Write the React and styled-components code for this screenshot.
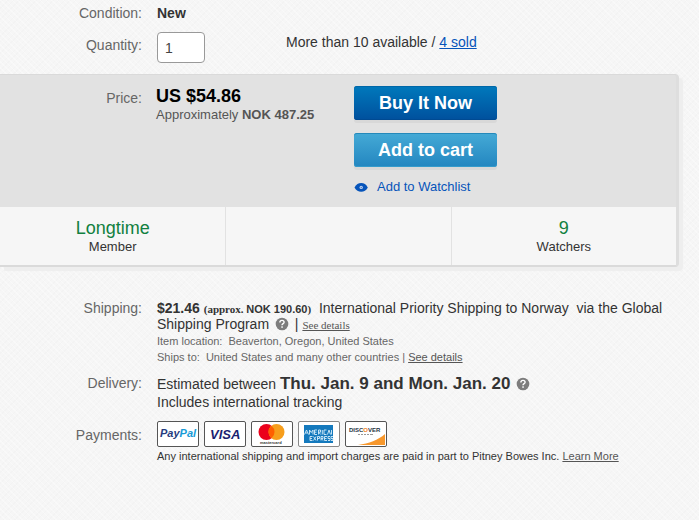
import styled, { createGlobalStyle } from "styled-components";

const App = () => {
  return (
    <>
      <GlobalStyle />
      <Page>
        <Options>
          <Row>
            <Label>Condition:</Label>
            <Value>
              <strong>New</strong>
            </Value>
          </Row>
          <Row>
            <Label as="label" htmlFor="quantity" $top={5}>Quantity:</Label>
            <QuantityValue>
              <QuantityInput id="quantity" type="text" defaultValue="1" />
              <Available>
                More than 10 available / <SoldLink href="#sold">4 sold</SoldLink>
              </Available>
            </QuantityValue>
          </Row>
        </Options>

        <BuyBox>
          <PriceRow>
            <Label $top={4}>Price:</Label>
            <Prices>
              <Price>US $54.86</Price>
              <Approx>
                Approximately <strong>NOK 487.25</strong>
              </Approx>
            </Prices>
            <Actions>
              <BuyButton type="button">Buy It Now</BuyButton>
              <CartButton type="button">Add to cart</CartButton>
              <WatchLink href="#watch">
                <EyeIcon />
                Add to Watchlist
              </WatchLink>
            </Actions>
          </PriceRow>
          <Stats>
            <Stat>
              <StatValue>Longtime</StatValue>
              <StatName>Member</StatName>
            </Stat>
            <Stat />
            <Stat>
              <StatValue>9</StatValue>
              <StatName>Watchers</StatName>
            </Stat>
          </Stats>
        </BuyBox>

        <Details>
          <Row>
            <Label>Shipping:</Label>
            <Value>
              <ShippingText>
                <strong>$21.46</strong>{" "}
                <SerifNote>
                  (approx. <SansNote>NOK 190.60</SansNote>)
                </SerifNote>
                &nbsp; International Priority Shipping to Norway &nbsp;via the Global Shipping Program{" "}
                <HelpIcon /> | <SerifLink href="#shipping">See details</SerifLink>
              </ShippingText>
              <Note>Item location: &nbsp;Beaverton, Oregon, United States</Note>
              <Note>
                Ships to: &nbsp;United States and many other countries |{" "}
                <NoteLink href="#locations">See details</NoteLink>
              </Note>
            </Value>
          </Row>
          <Row>
            <Label>Delivery:</Label>
            <Value>
              <DeliveryText>
                Estimated between <Dates>Thu. Jan. 9 and Mon. Jan. 20</Dates> <HelpIcon />
              </DeliveryText>
              <DeliveryText>Includes international tracking</DeliveryText>
            </Value>
          </Row>
          <Row>
            <Label $top={6}>Payments:</Label>
            <Value>
              <Cards>
                <PayPal />
                <Visa />
                <Mastercard />
                <Amex />
                <Discover />
              </Cards>
              <PaymentNote>
                Any international shipping and import charges are paid in part to Pitney Bowes Inc.{" "}
                <NoteLink href="#learn">Learn More</NoteLink>
              </PaymentNote>
            </Value>
          </Row>
        </Details>
      </Page>
    </>
  );
};

const EyeIcon = () => (
  <svg width="14" height="10" viewBox="0 0 14 10" aria-hidden="true">
    <path d="M0.5 5.500C2.2 2.300 4.400 1 7.200 1S12.200 2.300 13.800 5.500C12.200 8.700 10 9.800 7.200 9.800S2.200 8.700 0.500 5.500Z" fill="#0654ba" />
    <circle cx="7.200" cy="5.400" r="1.700" fill="#b9cdec" />
    <circle cx="7.200" cy="5.400" r="0.500" fill="#0654ba" />
  </svg>
);

const HelpIcon = () => (
  <Help width="14" height="14" viewBox="0 0 14 14" role="img" aria-label="Help">
    <circle cx="7" cy="7" r="6.300" fill="#7d7d7d" />
    <path d="M4.900 5.400C4.900 4.100 5.800 3.400 7 3.400S9.100 4.100 9.100 5.200C9.100 6.600 7 6.700 7 8.300" fill="none" stroke="#fff" strokeWidth="1.400" />
    <rect x="6.300" y="9.300" width="1.500" height="1.500" fill="#fff" />
  </Help>
);

const PayPal = () => (
  <Card viewBox="0 0 40 24" aria-label="PayPal">
    <text x="2" y="15" fontSize="11">
      <tspan fill="#253b80">Pay</tspan>
      <tspan fill="#179bd7">Pal</tspan>
    </text>
  </Card>
);

const Visa = () => (
  <Card viewBox="0 0 40 24" aria-label="Visa">
    <text x="5" y="17" fontSize="13" fill="#1a1f71">VISA</text>
  </Card>
);

const Mastercard = () => (
  <Card viewBox="0 0 40 24" aria-label="Mastercard">
    <circle cx="14.500" cy="10" r="8" fill="#eb001b" />
    <circle cx="24.500" cy="10" r="8" fill="#f79e1b" />
    <path d="M19.500 3.750A8 8 0 0 1 19.500 16.250A8 8 0 0 1 19.500 3.750Z" fill="#ff5f00" />
    <CardCaption x="8" y="22" fontSize="4" fill="#333">mastercard</CardCaption>
  </Card>
);

const Amex = () => (
  <Card viewBox="0 0 40 24" $pale aria-label="American Express">
    <rect x="5" y="3" width="29" height="18" fill="#1479bd" />
    <path d="M5.500 12.500L7.500 8L9.500 12.500M6.500 11H8.500M10.500 12.500V8L12.300 10.500L14 8V12.500M18 8H15.500V12.500H18M15.500 10.200H17.500M19.500 12.500V8H21.500V10.200H19.500L21.800 12.500M23.300 8V12.500M27.500 8H25V12.500H27.500M28.500 12.500L30 8L31.500 12.500M32.500 12.500V8" fill="none" stroke="#d7edf9" strokeWidth="0.900" />
    <path d="M13.500 14.500H11V18.500H13.500M11 16.500H13M14.500 14.500L17 18.500M17 14.500L14.500 18.500M18.500 18.500V14.500H20.500V16.500H18.500M22 18.500V14.500H24V16.500H22L24.300 18.500M28 14.500H25.500V18.500H28M25.500 16.500H27.500M31 14.500H29V16.500H31V18.500H29M34 14.500H32V16.500H34V18.500H32" fill="none" stroke="#d7edf9" strokeWidth="0.900" />
  </Card>
);

const Discover = () => (
  <Card viewBox="0 0 40 24" aria-label="Discover">
    <path d="M39 12V23H12C23 21.500 32 18 39 12Z" fill="#f7982d" />
    <CardCaption x="3" y="10" fontSize="6" fill="#27343f">
      DISC<tspan fill="#f58220">O</tspan>VER
    </CardCaption>
    <path d="M12 12.500H14M15 12.500H17M18 12.500H20M21 12.500H23M24 12.500H27" stroke="#999" strokeWidth="1" />
  </Card>
);

const GlobalStyle = createGlobalStyle`
  body {
    margin: 0;
    background-color: #f6f6f6;
    background-image:
      repeating-linear-gradient(45deg, rgba(255, 255, 255, 0.3) 0 1px, transparent 1px 4px),
      repeating-linear-gradient(-45deg, rgba(0, 0, 0, 0.01) 0 1px, transparent 1px 4px);
    color: #333;
    font-family: "Liberation Sans", Arial, sans-serif;
    font-size: 14px;
    line-height: 16px;
  }
`;

const Page = styled.main`
  padding-top: 5px;
`;

const Options = styled.section`
  display: flex;
  flex-direction: column;
  gap: 11px;
  margin-bottom: 11px;
`;

const Row = styled.div`
  display: grid;
  grid-template-columns: 142px 1fr;
  column-gap: 15px;
`;

const Label = styled.div`
  padding-top: ${(props) => props.$top || 0}px;
  text-align: right;
  color: #666;
`;

const Value = styled.div`
  min-width: 0;
`;

const QuantityValue = styled.div`
  display: flex;
  align-items: flex-start;
  gap: 81px;
`;

const QuantityInput = styled.input`
  box-sizing: border-box;
  width: 48px;
  height: 31px;
  padding: 0 7px;
  border: 1px solid #999;
  border-radius: 4px;
  background: #fff;
  color: #444;
  font: inherit;
`;

const Available = styled.div`
  padding-top: 2px;
`;

const SoldLink = styled.a`
  color: #0654ba;
`;

const BuyBox = styled.section`
  box-sizing: border-box;
  margin-right: 20px;
  border: 1px solid #dadada;
  border-width: 1px 3px 2px 0;
  border-right-color: #dedede;
  border-radius: 0 4px 4px 0;
  background: #e2e2e2;
  box-shadow: 4px 4px 1px #eee;
`;

const PriceRow = styled.div`
  display: grid;
  grid-template-columns: 142px 184px 1fr;
  column-gap: 14px;
  padding: 11px 0 13px;
`;

const Prices = styled.div`
  color: #555;
`;

const Price = styled.div`
  color: #000;
  font-size: 18px;
  font-weight: bold;
  line-height: 20px;
`;

const Approx = styled.div`
  font-size: 13px;
  line-height: 18px;
`;

const Actions = styled.div`
  display: flex;
  flex-direction: column;
  align-items: flex-start;
  gap: 13px;
`;

const ActionButton = styled.button`
  width: 143px;
  height: 34px;
  padding: 0;
  border: 0;
  border-radius: 3px;
  color: #fff;
  font-family: inherit;
  font-size: 18px;
  font-weight: bold;
  line-height: 20px;
  cursor: pointer;
`;

const BuyButton = styled(ActionButton)`
  background: linear-gradient(#0079bc, #00509d);
  box-shadow: inset 0 1px 0 #0067a8, inset 0 -1px 0 #004a92, 0 3px 0 #d8d8d8;
`;

const CartButton = styled(ActionButton)`
  background: linear-gradient(#45aad6, #2386c0);
  box-shadow: inset 0 1px 0 #2589ba, inset 0 -1px 0 #359bcb, 0 3px 0 #d8d8d8;
`;

const WatchLink = styled.a`
  display: flex;
  align-items: center;
  gap: 9px;
  color: #0654ba;
  font-size: 13px;
  line-height: 14px;
  text-decoration: none;
`;

const Stats = styled.div`
  display: grid;
  grid-template-columns: repeat(3, 1fr);
  background: #f6f6f6;
`;

const Stat = styled.div`
  padding: 11px 0 9px;
  text-align: center;
  border-left: 1px solid #e2e2e2;

  &:first-child {
    border-left: 0;
  }
`;

const StatValue = styled.div`
  color: #118040;
  font-size: 18px;
  line-height: 20px;
`;

const StatName = styled.div`
  font-size: 13px;
  line-height: 18px;
`;

const Details = styled.section`
  display: flex;
  flex-direction: column;
  gap: 10px;
  margin-top: 33px;
`;

const ShippingText = styled.div`
  margin-bottom: 1px;
  padding-right: 20px;
`;

const SerifNote = styled.strong`
  font-family: "Liberation Serif", "Times New Roman", serif;
  font-size: 11px;
  line-height: 12px;
`;

const SansNote = styled.span`
  font-family: "Liberation Sans", Arial, sans-serif;
`;

const SerifLink = styled.a`
  color: #555;
  font-family: "Liberation Serif", "Times New Roman", serif;
  font-size: 11px;
  line-height: 12px;
`;

const Note = styled.div`
  color: #666;
  font-size: 11px;
`;

const NoteLink = styled.a`
  color: #555;
`;

const DeliveryText = styled.div`
  line-height: 18px;
`;

const Dates = styled.strong`
  font-size: 17px;
`;

const Help = styled.svg`
  margin: 0 2px;
  vertical-align: -2px;
`;

const Cards = styled.div`
  display: flex;
  gap: 5px;
  margin-bottom: 1px;
`;

const Card = styled.svg.attrs({ role: "img" })`
  box-sizing: border-box;
  width: 42px;
  height: 26px;
  border: 1px solid ${(props) => (props.$pale ? "#888" : "#555")};
  border-radius: 2px;
  background: #fff;
  font-family: "Liberation Sans", Arial, sans-serif;
  font-style: italic;
  font-weight: bold;
`;

const CardCaption = styled.text`
  font-style: normal;
`;

const PaymentNote = styled.div`
  font-size: 11px;
`;

export default App;
